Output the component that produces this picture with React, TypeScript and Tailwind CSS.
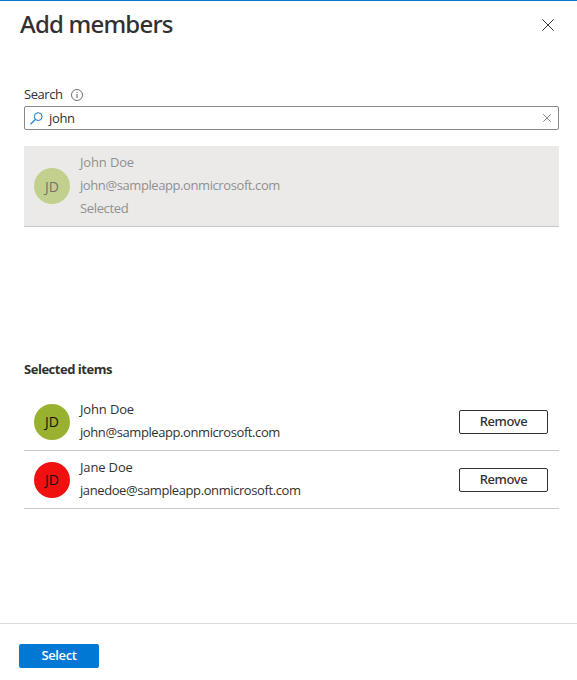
import React from "react";

type Member = { name: string; mail: string; color: string };

const members: Member[] = [
  { name: "John Doe", mail: "john@sampleapp.onmicrosoft.com", color: "bg-[#98b22f]" },
  { name: "Jane Doe", mail: "janedoe@sampleapp.onmicrosoft.com", color: "bg-[#f01010]" },
];

function Cross({ size, className }: { size: number; className: string }) {
  return (
    <svg width={size} height={size} viewBox="0 0 12 12" fill="none" stroke="currentColor" className={className}>
      <path d="M.3 .3 11.7 11.7M11.7 .3 .3 11.7" vectorEffect="non-scaling-stroke" />
    </svg>
  );
}

function Avatar({ className }: { className: string }) {
  return (
    <div className={`flex size-9 shrink-0 items-center justify-center rounded-full text-[14px] ${className}`}>
      JD
    </div>
  );
}

function MemberRow({ member }: { member: Member }) {
  return (
    <li className="flex h-[58px] items-center border-b border-[#c8c8c8] pr-[11px] pl-2.5">
      <Avatar className={`${member.color} text-[#111]`} />
      <div className="ml-2.5 grow pb-px leading-[23px]">
        <div className="tracking-[-0.15px]">{member.name}</div>
        <div className="tracking-[-0.41px]">{member.mail}</div>
      </div>
      <button className="h-6 w-[89px] rounded-xs border border-[#323130] pb-0.5 font-['Noto_Sans',sans-serif] text-[13px] leading-5 font-medium tracking-[-0.4px]">
        Remove
      </button>
    </li>
  );
}

export default function App() {
  return (
    <div className="flex h-[680px] w-[577px] flex-col border-t border-[#0078d4] bg-white font-['Open_Sans','Noto_Sans',sans-serif] text-[13px] text-[#323130]">
      <header className="flex h-[84px] items-start justify-between pr-[23px] pl-5">
        <h1 className="mt-[7px] font-['Noto_Sans',sans-serif] text-[24px] leading-8 font-medium tracking-[-0.8px]">
          Add members
        </h1>
        <Cross size={12} className="mt-[18px]" />
      </header>

      <main className="flex grow flex-col pr-[18px] pl-6">
        <label className="flex h-5 items-center">
          <span className="pb-0.5 leading-[18px] tracking-[-0.45px]">Search</span>
          <svg width="12" height="12" viewBox="0 0 12 12" fill="none" stroke="#605e5c" className="ml-[9px]">
            <circle cx="6" cy="6" r="5.5" strokeWidth=".9" />
            <path d="M6 5v4M6 3v1" />
          </svg>
        </label>
        <div className="mt-px flex h-6 items-center rounded-xs border border-[#8a8886] pr-[7px] pl-[5px]">
          <svg width="13" height="13" viewBox="0 0 13 13" fill="none" stroke="#0078d4" className="shrink-0">
            <circle cx="8.2" cy="4.6" r="3.9" />
            <path d="M5.4 7.4 .5 12.3" strokeWidth="1.2" />
          </svg>
          <span className="ml-1.5 grow leading-5 tracking-[-0.35px]">john</span>
          <Cross size={8} className="text-[#8a8886]" />
        </div>

        <div className="mt-4 flex h-[81px] items-center border-b border-[#c8c8c8] bg-[#ebeae9] pl-2.5 text-[#91908e]">
          <Avatar className="bg-[#c2d08d] text-[#6f7568]" />
          <div className="ml-2.5 pb-px leading-[23px]">
            <div className="tracking-[-0.15px]">John Doe</div>
            <div className="tracking-[-0.41px]">john@sampleapp.onmicrosoft.com</div>
            <div className="tracking-[-0.35px]">Selected</div>
          </div>
        </div>

        <h2 className="mt-[132px] leading-5 font-bold tracking-[-0.47px]">Selected items</h2>
        <ul className="mt-3.5">
          {members.map((m) => (
            <MemberRow key={m.mail} member={m} />
          ))}
        </ul>
      </main>

      <footer className="h-[57px] shrink-0 border-t border-[#dcdcdc] pt-5 pl-[19px]">
        <button className="block h-6 w-20 rounded-xs bg-[#0078d4] pb-0.5 leading-[22px] font-semibold tracking-[-0.35px] text-white">
          Select
        </button>
      </footer>
    </div>
  );
}
